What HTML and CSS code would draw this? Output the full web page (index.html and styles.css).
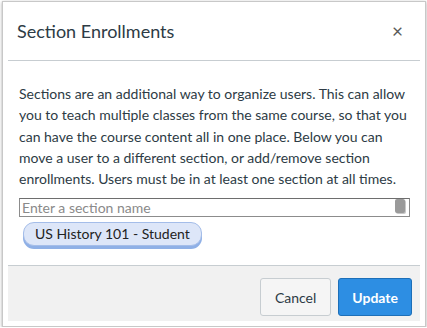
FILE: index.html
```html
<!DOCTYPE html>
<html lang="en">
<head>
    <meta charset="UTF-8">
    <meta name="viewport" content="width=device-width, initial-scale=1.0">
    <title>Section Enrollments</title>
    <link rel="stylesheet" href="styles.css">
</head>
<body>
    <div class="dialog">
        <div class="dialog-inner">
            <div class="dialog-header">
                <h2 class="dialog-title">Section Enrollments</h2>
                <span class="close">&times;</span>
            </div>
            <div class="dialog-body">
                <p class="intro">Sections are an additional way to organize users. This can allow you to teach multiple classes from the same course, so that you can have the course content all in one place. Below you can move a user to a different section, or add/remove section enrollments. Users must be in at least one section at all times.</p>
                <div class="section-input">
                    <input type="text" placeholder="Enter a section name">
                    <span class="input-handle"></span>
                </div>
                <div class="tokens">
                    <span class="token">US History 101 - Student</span>
                </div>
            </div>
            <div class="dialog-footer">
                <button class="btn">Cancel</button>
                <button class="btn btn-primary">Update</button>
            </div>
        </div>
    </div>
</body>
</html>
```

FILE: styles.css
```css
body {
    margin: 0;
    padding: 0;
    background-color: #fff;
    color: #2d3b45;
    font-family: Lato, "Open Sans", sans-serif;
}
.dialog {
    margin: 1px 2px 0 2px;
    width: 412px;
    height: 314px;
    padding: 5px;
    border: 1px solid #c8c8c8;
    box-shadow: 0 1px 3px rgba(0, 0, 0, 0.35);
    background-color: #fff;
}
.dialog-inner {
    display: flex;
    flex-direction: column;
    height: 100%;
}
.dialog-header {
    display: flex;
    align-items: center;
    justify-content: space-between;
    height: 47px;
    padding: 0 17px 6px 9px;
    border-bottom: 1px solid #c7cdd1;
}
.dialog-title {
    margin: 0;
    font-size: 18px;
    font-weight: normal;
}
.close {
    font-size: 19px;
    color: #5a5a5a;
    line-height: 1;
}
.dialog-body {
    flex: 1;
    padding: 0 11px;
}
.intro {
    margin: 22px 0 8px 0;
    font-size: 14px;
    line-height: 21.3px;
}
/* champ de saisie */
.section-input {
    position: relative;
}
.section-input input {
    box-sizing: border-box;
    width: 391px;
    height: 19px;
    margin: 0;
    padding: 0 2px;
    border: 1px solid #8c8c8c;
    border-top-color: #6e6e6e;
    font-family: inherit;
    font-size: 14px;
    color: #333;
    outline: none;
}
.section-input input::placeholder {
    color: #8a8a8a;
}
.input-handle {
    position: absolute;
    top: 2px;
    left: 376px;
    width: 10px;
    height: 14px;
    background-color: #9a9a9a;
    border-radius: 2px;
    box-shadow: 1px 1px 0 #c8c8c8;
}
.tokens {
    padding: 5px 4px;
}
.token {
    display: inline-block;
    padding: 2px 11px 2px 11px;
    font-size: 14px;
    line-height: 18px;
    color: #222;
    background-color: #dde6f8;
    border: 1px solid #a4bde9;
    border-radius: 11px;
    box-shadow: 0 3px 0 #8fb0e6;
}
.dialog-footer {
    display: flex;
    justify-content: flex-end;
    align-items: flex-start;
    gap: 7px;
    height: 43px;
    padding: 12px 8px 0 8px;
    background-color: #f1f1f1;
    border-top: 1px solid #c7cdd1;
}
.btn {
    height: 38px;
    padding: 0 14px;
    font-family: inherit;
    font-size: 14px;
    color: #2d3b45;
    background-color: #f5f5f5;
    border: 1px solid #c7cdd1;
    border-radius: 3px;
}
.btn-primary {
    padding: 0 13px;
    color: #fff;
    font-weight: bold;
    background-color: #2d8ee3;
    border-color: #1d6fb8;
}
```
